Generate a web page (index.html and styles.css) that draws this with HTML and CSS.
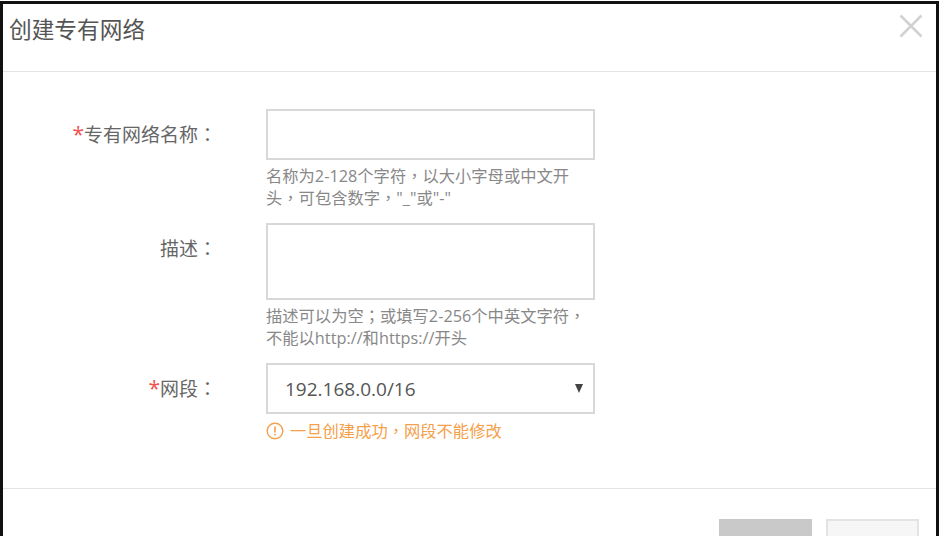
FILE: index.html
```html
<!DOCTYPE html>
<html lang="zh-CN">
<head>
  <meta charset="UTF-8">
  <title>创建专有网络</title>
  <link rel="stylesheet" href="styles.css">
</head>
<body>

<div class="dialog">
  <div class="dialog-header">
    <h2>创建专有网络</h2>
    <svg class="close" width="26" height="26" viewBox="0 0 26 26" aria-label="关闭">
      <path d="M2.5 2.5 L23.5 23.5 M23.5 2.5 L2.5 23.5" stroke="#d2d2d2" stroke-width="2.6" fill="none"/>
    </svg>
  </div>

  <div class="dialog-body">
    <div class="form-row">
      <label class="form-label"><span class="required">*</span>专有网络名称<span class="punct" lang="zh-Hant">：</span></label>
      <div class="form-field">
        <input class="form-input" type="text">
        <p class="hint">名称为2-128个字符<span class="punct" lang="zh-Hant">，</span>以大小字母或中文开<br>头<span class="punct" lang="zh-Hant">，</span>可包含数字<span class="punct" lang="zh-Hant">，</span>"_"或"-"</p>
      </div>
    </div>

    <div class="form-row">
      <label class="form-label">描述<span class="punct" lang="zh-Hant">：</span></label>
      <div class="form-field">
        <textarea class="form-input form-textarea"></textarea>
        <p class="hint">描述可以为空<span class="punct" lang="zh-Hant">；</span>或填写2-256个中英文字符<span class="punct" lang="zh-Hant">，</span><br>不能以http://和https://开头</p>
      </div>
    </div>

    <div class="form-row">
      <label class="form-label"><span class="required">*</span>网段<span class="punct" lang="zh-Hant">：</span></label>
      <div class="form-field">
        <div class="form-input form-select">
          <span>192.168.0.0/16</span>
          <span class="caret"></span>
        </div>
        <p class="warning">
          <svg width="18" height="18" viewBox="0 0 18 18">
            <circle cx="9" cy="9" r="7.8" stroke="#f5a04a" stroke-width="1.4" fill="none"/>
            <path d="M9 4.5 V10.5 M9 12 V13.6" stroke="#f5a04a" stroke-width="1.6" fill="none"/>
          </svg>
          <span>一旦创建成功<span class="punct" lang="zh-Hant">，</span>网段不能修改</span>
        </p>
      </div>
    </div>
  </div>

  <div class="dialog-footer">
    <button class="btn btn-primary"></button>
    <button class="btn btn-cancel"></button>
  </div>
</div>

</body>
</html>
```

FILE: styles.css
```css
html, body {
  margin: 0;
  padding: 0;
  height: 536px;
  overflow: hidden;
  background-color: #fff;
}
body {
  font-family: "Open Sans", "Noto Sans CJK SC", sans-serif;
  color: #666;
}
.dialog {
  box-sizing: border-box;
  width: 939px;
  height: 600px;
  margin-top: 1px;
  border: 3px solid #111;
  border-bottom: none;
  background-color: #fff;
}
.dialog-header {
  display: flex;
  justify-content: space-between;
  align-items: center;
  box-sizing: border-box;
  height: 68px;
  padding: 0 12px 18px 6px;
  border-bottom: 1px solid #e3e3e3;
}
.dialog-header h2 {
  margin: 0;
  font-size: 22.7px;
  font-weight: normal;
  color: #555;
}
.close {
  margin-bottom: 6px;
}
.dialog-body {
  box-sizing: border-box;
  height: 417px;
  padding-top: 37px;
  border-bottom: 1px solid #e3e3e3;
}
.form-row {
  display: flex;
  gap: 49px;
  margin-bottom: 14px;
}
.form-label {
  width: 214px;
  flex-shrink: 0;
  padding-top: 14px;
  text-align: right;
  font-size: 19px;
  line-height: 24px;
  color: #666;
  white-space: nowrap;
}
.required {
  font-size: 21px;
  line-height: 0;
  color: #f0524f;
}
.punct {
  font-family: "Noto Sans CJK TC", sans-serif;
  line-height: 0;
}
.form-field {
  width: 329px;
}
.form-input {
  display: block;
  box-sizing: border-box;
  width: 329px;
  height: 51px;
  margin: 0;
  padding: 0;
  border: 2px solid #d8d8d8;
  background-color: #fff;
  outline: none;
}
.form-textarea {
  height: 77px;
  resize: none;
}
.form-select {
  display: flex;
  justify-content: space-between;
  align-items: center;
  padding: 0 10px 0 17px;
  font-size: 19px;
  color: #555;
}
.caret {
  width: 0;
  height: 0;
  border-left: 4.5px solid transparent;
  border-right: 4.5px solid transparent;
  border-top: 9px solid #444;
}
.hint {
  margin: 5px 0 0;
  font-size: 16.3px;
  line-height: 22px;
  color: #888;
  white-space: nowrap;
}
.warning {
  display: flex;
  align-items: center;
  gap: 6px;
  margin: 6px 0 0;
  font-size: 16.3px;
  line-height: 22px;
  color: #f5a04a;
}
.dialog-footer {
  display: flex;
  justify-content: flex-end;
  gap: 14px;
  padding: 30px 17px 0 0;
}
.btn {
  box-sizing: border-box;
  width: 93px;
  height: 50px;
  border: none;
  padding: 0;
}
.btn-primary {
  background-color: #c9c9c9;
}
.btn-cancel {
  background-color: #f6f6f6;
  border: 2px solid #e3e3e3;
}
```
